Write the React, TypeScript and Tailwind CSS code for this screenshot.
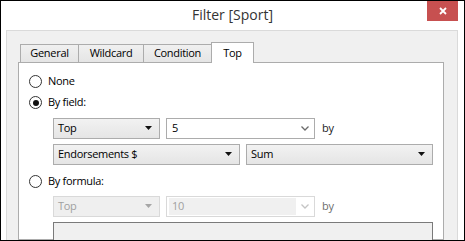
const font = { fontFamily: '"Segoe UI", "Open Sans", "Noto Sans", sans-serif' };

const Arrow = ({ disabled = false }: { disabled?: boolean }) => (
  <svg width="7" height="4" viewBox="0 0 7 4" className="shrink-0">
    <path d="M0 0H7L3.5 4Z" fill={disabled ? "#a6a6a6" : "#111"} />
  </svg>
);

const Chevron = ({ disabled = false }: { disabled?: boolean }) => (
  <svg width="8" height="5" viewBox="0 0 8 5" className="shrink-0">
    <path d="M0.5 0.5L4 4L7.5 0.5" fill="none" stroke={disabled ? "#c4c4c4" : "#6b6b6b"} strokeWidth="1.3" />
  </svg>
);

const Select = ({ value, width, disabled = false }: { value: string; width: string; disabled?: boolean }) => (
  <div
    className={`${width} h-[21px] flex items-center justify-between pl-[4px] pr-[7px] border ${
      disabled
        ? "border-[#d9d9d9] bg-[#efefef] text-[#a0a0a0]"
        : "border-[#acacac] bg-gradient-to-b from-[#f2f2f2] to-[#e5e5e5] text-black"
    }`}
  >
    <span>{value}</span>
    <Arrow disabled={disabled} />
  </div>
);

const Combo = ({ value, disabled = false }: { value: string; disabled?: boolean }) => (
  <div
    className={`w-[149px] h-[21px] flex items-center border bg-white ${
      disabled ? "border-[#d9d9d9]" : "border-[#acacac]"
    }`}
  >
    <div
      className={`flex-1 h-[17px] ml-[2px] pl-[3px] flex items-center ${
        disabled ? "bg-[#f0f0f0] text-[#a0a0a0]" : "text-black"
      }`}
    >
      {value}
    </div>
    <div className="w-[18px] flex justify-center">
      <Chevron disabled={disabled} />
    </div>
  </div>
);

const Radio = ({ label, checked = false }: { label: string; checked?: boolean }) => (
  <div className="h-[18px] flex items-center gap-[6px]">
    <div className="w-[13px] h-[13px] rounded-full border border-[#333] bg-white flex items-center justify-center">
      {checked && <div className="w-[6px] h-[6px] rounded-full bg-[#111]" />}
    </div>
    <span>{label}</span>
  </div>
);

const tabs = ["General", "Wildcard", "Condition", "Top"];

export default function App() {
  return (
    <div
      style={font}
      className="w-[465px] h-[241px] border border-black bg-white flex flex-col overflow-hidden text-[11px] tracking-[-0.3px] text-black"
    >
      {/* Barre de titre */}
      <div className="h-[29px] shrink-0 grid grid-cols-[1fr_auto_1fr]">
        <div />
        <div className="text-[14px] tracking-normal text-[#333] leading-[28px]">Filter [Sport]</div>
        <div className="flex justify-end pr-[6px]">
          <div className="w-[31px] h-[20px] bg-[#c75050] flex items-center justify-center">
            <svg width="8" height="8" viewBox="0 0 8 8">
              <path d="M1 1L7 7M7 1L1 7" stroke="white" strokeWidth="1.8" />
            </svg>
          </div>
        </div>
      </div>

      {/* Corps */}
      <div className="flex-1 flex pl-[5px] pr-[6px] min-h-0">
        <div className="flex-1 border-t border-l border-r border-[#dadada] bg-[#f0f0f0] pt-[11px] pl-[11px] pr-[13px] flex flex-col min-h-0">
          {/* Onglets */}
          <div className="h-[20px] flex items-end pl-[2px] relative z-10">
            {tabs.map((t, i) => {
              const active = t === "Top";
              const widths = ["w-[59px]", "w-[66px]", "w-[69px]", "w-[43px]"];
              return (
                <div
                  key={t}
                  className={`${widths[i]} ${i > 0 ? "-ml-px" : ""} border border-b-0 flex justify-center ${
                    active
                      ? "h-[21px] -mb-px bg-white border-[#acacac] items-center pt-[1px]"
                      : "h-[18px] bg-gradient-to-b from-[#f0f0f0] to-[#e5e5e5] border-[#acacac] items-center"
                  }`}
                >
                  {t}
                </div>
              );
            })}
          </div>

          {/* Panneau */}
          <div className="flex-1 border border-[#acacac] bg-white pl-[10px] pt-[10px] flex flex-col min-h-0">
            <Radio label="None" />
            <div className="mt-[4px]">
              <Radio label="By field:" checked />
            </div>

            <div className="ml-[24px] mt-[6px] flex items-center">
              <Select value="Top" width="w-[107px]" />
              <div className="ml-[6px]">
                <Combo value="5" />
              </div>
              <span className="ml-[7px] text-[#222]">by</span>
            </div>
            <div className="ml-[24px] mt-[5px] flex items-center gap-[6px]">
              <Select value="Endorsements $" width="w-[187px]" />
              <Select value="Sum" width="w-[187px]" />
            </div>

            <div className="mt-[8px]">
              <Radio label="By formula:" />
            </div>

            <div className="ml-[24px] mt-[5px] flex items-center">
              <Select value="Top" width="w-[107px]" disabled />
              <div className="ml-[6px]">
                <Combo value="10" disabled />
              </div>
              <span className="ml-[7px] text-[#6d6d6d]">by</span>
            </div>
            <div className="ml-[24px] mt-[5px] w-[380px] h-[60px] shrink-0 border border-[#7a7a7a] bg-[#f0f0f0]" />
          </div>
        </div>
      </div>
    </div>
  );
}
